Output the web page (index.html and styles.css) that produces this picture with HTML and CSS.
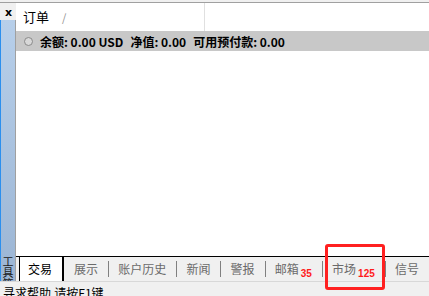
FILE: index.html
```html
<!DOCTYPE html>
<html lang="zh">
<head>
    <meta charset="UTF-8">
    <title>终端</title>
    <link rel="stylesheet" href="styles.css">
</head>
<body>
    <div class="window">
        <div class="top-line"></div>
        <div class="frame">
            <div class="side">
                <div class="side-close">x</div>
                <div class="side-bar">
                    <span class="side-title">工具箱</span>
                </div>
            </div>
            <div class="main">
                <div class="header">
                    <div class="header-col first">订单 <span class="slash">/</span></div>
                    <div class="header-col"></div>
                </div>
                <div class="balance">
                    <span class="dot"></span>
                    <span>余额: 0.00 USD</span>
                    <span>净值: 0.00</span>
                    <span>可用预付款: 0.00</span>
                </div>
                <div class="content"></div>
                <div class="tabs">
                    <div class="tab active">交易</div>
                    <div class="tab">展示</div>
                    <div class="sep"></div>
                    <div class="tab">账户历史</div>
                    <div class="sep"></div>
                    <div class="tab">新闻</div>
                    <div class="sep"></div>
                    <div class="tab">警报</div>
                    <div class="sep"></div>
                    <div class="tab">邮箱<span class="count">35</span></div>
                    <div class="sep"></div>
                    <div class="tab market">市场<span class="count">125</span>
                        <div class="mark"></div>
                    </div>
                    <div class="sep"></div>
                    <div class="tab">信号</div>
                </div>
            </div>
        </div>
        <div class="status">寻求帮助,请按F1键</div>
    </div>
</body>
</html>
```

FILE: styles.css
```css
body {
    margin: 0;
    background-color: #f0f0f0;
    font-family: "Noto Sans CJK SC", "Liberation Sans", sans-serif;
    color: #000000;
}
.window {
    width: 429px;
    height: 296px;
    display: flex;
    flex-direction: column;
    overflow: hidden;
}
.top-line {
    height: 2px;
    border-bottom: 1px solid #a0a0a0;
    flex-shrink: 0;
}
.frame {
    display: flex;
    height: 278px;
    flex-shrink: 0;
}
.side {
    width: 16px;
    display: flex;
    flex-direction: column;
    flex-shrink: 0;
}
.side-close {
    height: 17px;
    font-family: "DejaVu Sans", sans-serif;
    font-weight: bold;
    font-size: 11px;
    line-height: 19px;
    padding-left: 5px;
    background-color: #f0f0f0;
}
.side-bar {
    flex: 1;
    background: linear-gradient(#b7cfea, #9bb5d4);
    border-left: 1px solid #2b8fee;
    border-right: 1px solid #a0a0a0;
    display: flex;
    align-items: flex-end;
    justify-content: center;
    overflow: hidden;
}
.side-title {
    writing-mode: vertical-rl;
    font-size: 11px;
    line-height: 12px;
    margin-bottom: -8px;
    color: #202020;
}
.main {
    flex: 1;
    display: flex;
    flex-direction: column;
    min-width: 0;
}
.header {
    height: 28px;
    background-color: #ffffff;
    display: flex;
    flex-shrink: 0;
}
.header-col {
    flex: 1;
    font-size: 13px;
    line-height: 28px;
    padding-left: 7px;
}
.header-col.first {
    flex: 0 0 181px;
    border-right: 1px solid #e0e0e0;
}
.slash {
    color: #909090;
    font-size: 11px;
    margin-left: 10px;
}
.balance {
    height: 20px;
    background-color: #c8c8c8;
    display: flex;
    align-items: center;
    gap: 7px;
    font-size: 12px;
    font-weight: bold;
    padding-left: 8px;
    flex-shrink: 0;
}
.dot {
    width: 7px;
    height: 7px;
    border-radius: 50%;
    border: 1px solid #8a8a8a;
    background-color: #d8d8d8;
}
.content {
    flex: 1;
    background-color: #ffffff;
}
.tabs {
    height: 24px;
    border-top: 1px solid #000000;
    background-color: #f0f0f0;
    display: flex;
    align-items: center;
    padding-left: 3px;
    flex-shrink: 0;
}
.tab {
    align-self: stretch;
    font-size: 12px;
    line-height: 23px;
    color: #6a6a6a;
    padding: 0 10px;
    position: relative;
    white-space: nowrap;
}
.tab.active {
    background-color: #ffffff;
    color: #000000;
    border-left: 1px solid #000000;
    border-right: 2px solid #000000;
    padding: 0 10px 0 8px;
}
.sep {
    width: 1px;
    height: 16px;
    background-color: #808080;
}
.count {
    color: #ff1a1a;
    font-family: "Liberation Sans", sans-serif;
    font-weight: bold;
    font-size: 10px;
    margin-left: 2px;
    position: relative;
    top: 3px;
}
.mark {
    position: absolute;
    left: 3px;
    top: -13px;
    width: 54px;
    height: 40px;
    border: 3px solid #ff2020;
    border-radius: 3px;
    z-index: 1;
}
.status {
    flex: 1;
    border-top: 1px solid #d8d8d8;
    font-size: 12px;
    line-height: 14px;
    padding: 4px 0 0 3px;
    white-space: nowrap;
}
```
